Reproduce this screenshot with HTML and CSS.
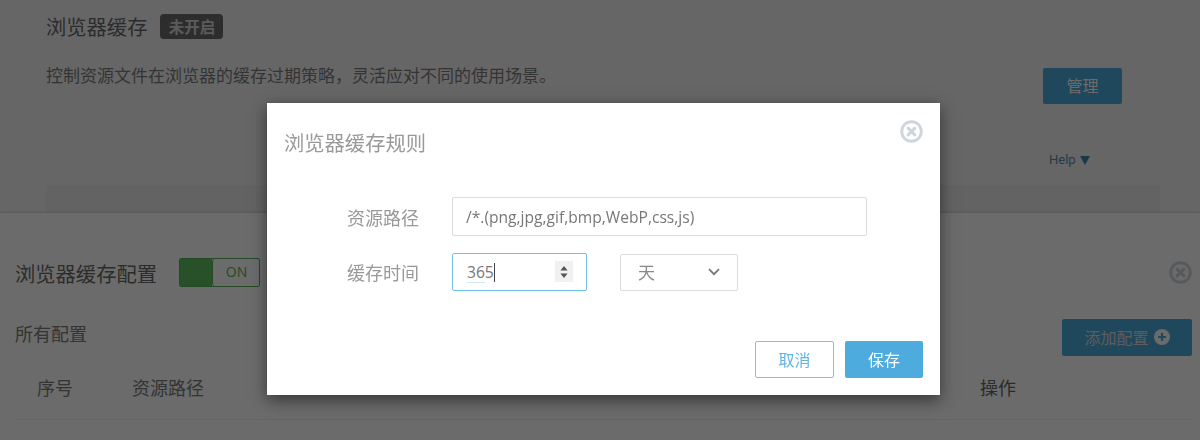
FILE: index.html
```html
<!DOCTYPE html>
<html lang="zh-CN">
<head>
<meta charset="utf-8">
<title>浏览器缓存</title>
<link rel="stylesheet" href="styles.css">
</head>
<body>
<div class="page">
  <section class="top">
    <div class="top-main">
      <div class="top-text">
        <div class="title-row">
          <h2 class="title">浏览器缓存</h2>
          <span class="badge">未开启</span>
        </div>
        <p class="desc">控制资源文件在浏览器的缓存过期策略，灵活应对不同的使用场景。</p>
      </div>
      <div class="top-side">
        <button class="btn btn-manage">管理</button>
        <a class="help">Help<svg class="help-arrow" viewBox="0 0 10 9"><path d="M0 0h10L5 9z"/></svg></a>
      </div>
    </div>
    <div class="help-box"></div>
  </section>

  <section class="panel">
    <div class="panel-head">
      <h3 class="panel-title">浏览器缓存配置</h3>
      <div class="toggle"><span class="toggle-on"></span><span class="toggle-label">ON</span></div>
      <svg class="close close-panel" viewBox="0 0 24 24"><circle cx="12" cy="12" r="10.2" fill="none" stroke-width="3"/><path d="M8.5 8.5l7 7M15.5 8.5l-7 7" fill="none" stroke-width="3.2" stroke-linecap="round"/></svg>
    </div>
    <div class="panel-row">
      <span class="all">所有配置</span>
      <button class="btn btn-add">添加配置<svg class="plus" viewBox="0 0 16 16"><circle cx="8" cy="8" r="8" fill="#fff"/><path d="M8 4v8M4 8h8" stroke="#4babdd" stroke-width="2.2"/></svg></button>
    </div>
    <div class="thead">
      <span class="th-no">序号</span>
      <span class="th-path">资源路径</span>
      <span class="th-op">操作</span>
    </div>
  </section>
</div>

<div class="overlay"></div>

<div class="modal">
  <div class="modal-head">
    <h3 class="modal-title">浏览器缓存规则</h3>
    <svg class="close close-modal" viewBox="0 0 24 24"><circle cx="12" cy="12" r="10.2" fill="none" stroke-width="3"/><path d="M8.5 8.5l7 7M15.5 8.5l-7 7" fill="none" stroke-width="3.2" stroke-linecap="round"/></svg>
  </div>
  <div class="form">
    <div class="form-row">
      <label class="label">资源路径</label>
      <div class="field field-path">/*.(png,jpg,gif,bmp,WebP,css,js)</div>
    </div>
    <div class="form-row">
      <label class="label">缓存时间</label>
      <div class="field field-num">
        <span class="num"><span class="spell">36</span>5</span><span class="caret"></span>
        <span class="stepper">
          <svg viewBox="0 0 8 12"><path d="M4 0l3.6 4.6H.4zM4 12L.4 7.4h7.2z"/></svg>
        </span>
      </div>
      <div class="field field-select">
        <span>天</span>
        <svg class="chev" viewBox="0 0 12 8"><path d="M1 1.2l5 5 5-5" fill="none" stroke-width="1.8"/></svg>
      </div>
    </div>
  </div>
  <div class="modal-foot">
    <button class="btn btn-cancel">取消</button>
    <button class="btn btn-save">保存</button>
  </div>
</div>
</body>
</html>
```
FILE: styles.css
```css
* { box-sizing: border-box; }
html, body { margin: 0; height: 440px; overflow: hidden; }
body {
  font-family: "Noto Sans CJK SC", "Open Sans", sans-serif;
  background: #fff;
  color: #777;
}
h2, h3, p { margin: 0; font-weight: 400; }

.page { display: flex; flex-direction: column; height: 440px; }

.top { height: 213px; background: #f4f4f4; padding: 0 40px 0 46px; display: flex; flex-direction: column; }
.top-main { display: flex; justify-content: space-between; height: 185px; }
.top-text { padding-top: 13px; }
.title-row { display: flex; align-items: center; gap: 13px; height: 26px; }
.title { font-size: 20.3px; line-height: 26px; color: #6a6a6a; }
.badge {
  background: #6b6b6b; color: #d8d8d8; font-size: 15.5px; font-weight: 700;
  height: 25px; width: 63px; border-radius: 4px;
  display: flex; align-items: center; justify-content: center;
}
.desc { font-size: 17px; line-height: 24px; margin-top: 24px; color: #7d7d7d; }

.top-side { width: 118px; display: flex; flex-direction: column; align-items: flex-start; padding: 68px 0 0 1px; }
.help { margin: 47px 0 0 6px; font: 13px/18px Roboto, sans-serif; color: #5a8cb0; display: flex; align-items: center; gap: 4px; }
.help-arrow { width: 10px; height: 9px; fill: #3f86ab; }
.help-box { width: 1114px; height: 28px; background: #ededed; }

.btn {
  border: 1px solid transparent; border-radius: 2px; padding: 0 0 2px;
  font-family: inherit; font-size: 16px; display: flex; align-items: center; justify-content: center;
}
.btn-manage { width: 79px; height: 36px; background: #4babdd; color: #fff; }

.panel { flex: 1; background: #fff; padding: 45px 8px 0 15px; box-shadow: 0 -1px 3px rgba(0,0,0,.12); position: relative; }
.panel-head { display: flex; align-items: center; height: 29px; }
.panel-title { font-size: 20.3px; line-height: 29px; color: #6a6a6a; width: 164px; margin-top: 2px; white-space: nowrap; }
.toggle {
  width: 81px; height: 29px; border: 1px solid #57b257; border-radius: 2px;
  display: flex; overflow: hidden;
}
.toggle-on { width: 32px; background: #62c162; }
.toggle-label {
  flex: 1; border-left: 1px solid #57b257; border-radius: 3px 0 0 3px;
  font: 14px/26px "Open Sans", sans-serif; color: #57b257; text-align: center; padding-left: 1px;
}
.close { display: block; }
.close circle, .close path { stroke: #cdd6dd; }
.close-panel { width: 23px; height: 23px; margin-left: auto; }

.panel-row { display: flex; justify-content: space-between; align-items: center; height: 37px; margin-top: 32px; }
.all { font-size: 18px; line-height: 24px; margin-bottom: 10px; color: #7d7d7d; }
.btn-add { width: 130px; height: 37px; background: #4babdd; color: #ddd; gap: 5px; }
.plus { width: 16px; height: 16px; }

.thead { display: flex; align-items: center; height: 64px; padding-bottom: 1px; border-bottom: 1px solid #f0f0f0; font-size: 18px; color: #7d7d7d; }
.th-no { margin-left: 22px; width: 95px; }
.th-path { width: 848px; }
.th-op { color: #666; }

.overlay { position: fixed; inset: 0; background: rgba(0,0,0,.58); }

.modal {
  position: absolute; left: 267px; top: 103px; width: 673px; height: 292px;
  background: #fff; box-shadow: 0 5px 15px rgba(0,0,0,.5);
  padding: 17px; display: flex; flex-direction: column;
}
.modal-head { display: flex; justify-content: space-between; height: 44px; }
.modal-title { font-size: 20.3px; line-height: 44px; color: #999; white-space: nowrap; }
.close-modal { width: 23px; height: 23px; }

.form { padding-top: 33px; display: flex; flex-direction: column; gap: 17px; flex: 1; }
.form-row { display: flex; align-items: center; }
.label { flex: none; width: 168px; padding-left: 63px; font-size: 18px; line-height: 24px; color: #999; white-space: nowrap; }
.field {
  border: 1px solid #dcdcdc; border-radius: 2px; background: #fff;
  font: 15.6px/24px "Open Sans", "Noto Sans CJK SC", sans-serif; color: #777;
  display: flex; align-items: center;
}
.field-path { width: 415px; height: 39px; padding-left: 13px; }
.field-num { width: 135px; height: 38px; padding-left: 14px; border-color: #6cc0ea; position: relative; }
.spell { border-bottom: 1px solid #cfe6f5; display: inline-block; line-height: 19px; }
.num { display: inline-block; }
.caret { width: 1px; height: 19px; background: #444; }
.stepper {
  position: absolute; left: 102px; top: 7px; width: 18px; height: 21px; background: #f1f1f1;
  display: flex; align-items: center; justify-content: center;
}
.stepper svg { width: 8px; height: 12px; fill: #555; }
.field-select {
  width: 118px; height: 37px; margin-left: 33px; padding: 0 17px; justify-content: space-between;
  font-family: "Noto Sans CJK SC", sans-serif; font-size: 17px; color: #888;
}
.chev { width: 12px; height: 8px; stroke: #777; }

.modal-foot { display: flex; justify-content: flex-end; gap: 11px; }
.btn-cancel { width: 79px; height: 37px; background: #fff; border-color: #7fc2e8; color: #61b4e2; }
.btn-save { width: 78px; height: 37px; background: #4dabdd; color: #fff; }
```
